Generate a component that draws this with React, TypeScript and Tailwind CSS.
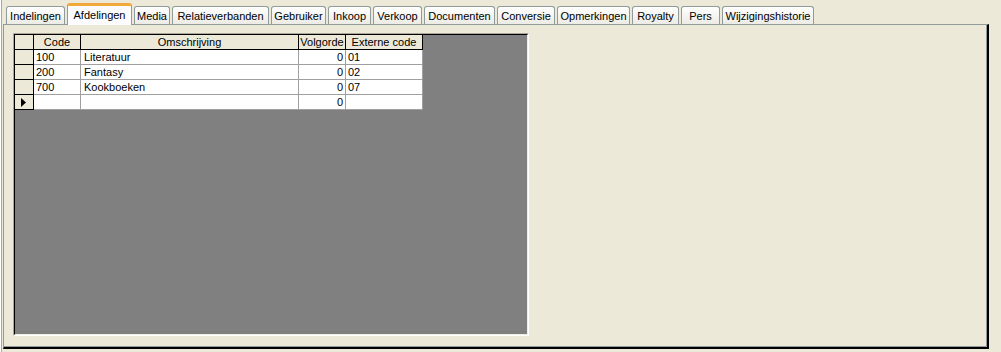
import React from 'react';

const tabs = [
  { name: 'Indelingen', w: 'w-[59px]' },
  { name: 'Afdelingen', w: 'w-[65px]', active: true },
  { name: 'Media', w: 'w-[36px]' },
  { name: 'Relatieverbanden', w: 'w-[97px]' },
  { name: 'Gebruiker', w: 'w-[55px]' },
  { name: 'Inkoop', w: 'w-[43px]' },
  { name: 'Verkoop', w: 'w-[49px]' },
  { name: 'Documenten', w: 'w-[71px]' },
  { name: 'Conversie', w: 'w-[58px]' },
  { name: 'Opmerkingen', w: 'w-[73px]' },
  { name: 'Royalty', w: 'w-[47px]' },
  { name: 'Pers', w: 'w-[39px]' },
  { name: 'Wijzigingshistorie', w: 'w-[92px]' },
];

const rows = [
  { code: '100', desc: 'Literatuur', order: '0', ext: '01' },
  { code: '200', desc: 'Fantasy', order: '0', ext: '02' },
  { code: '700', desc: 'Kookboeken', order: '0', ext: '07' },
  { code: '', desc: '', order: '0', ext: '', current: true },
];

const App: React.FC = () => {
  return (
    <div
      className="w-[1001px] h-[352px] bg-[#ece9d8] border-l border-white text-[11px] text-black overflow-hidden"
      style={{ fontFamily: '"Liberation Sans", Arial, sans-serif' }}
    >
      <div className="h-full border-l border-[#aca899] pl-[1px]">
        {/* Tab strip */}
        <div className="h-[24px] flex items-end gap-[2px] pl-[3px]">
          {tabs.map((t) =>
            t.active ? (
              <div
                key={t.name}
                className={`${t.w} h-[22px] -mb-[1px] relative z-10 bg-[#fcfcfe] border-x border-[#919b9c] border-t-[3px] border-t-[#f2a93b] rounded-t-[3px] flex items-center justify-center leading-none`}
              >
                {t.name}
              </div>
            ) : (
              <div
                key={t.name}
                className={`${t.w} h-[18px] bg-linear-to-b from-white to-[#ecebe5] border border-b-0 border-[#919b9c] rounded-t-[3px] flex items-center justify-center leading-none pt-[1px]`}
              >
                {t.name}
              </div>
            )
          )}
        </div>

        {/* Tab page */}
        <div className="w-[986px] h-[325px] border-t border-l border-[#919b9c] border-r-2 border-b-2 border-r-black border-b-black">
          <div className="h-full border-r border-b border-[#919b9c] pl-[9px] pt-[8px]">
            {/* Grid */}
            <div className="w-[516px] h-[303px] border-t border-l border-[#aca899] border-r border-b border-r-white border-b-white">
              <div className="h-full border-t border-l border-black border-r border-b border-r-[#f1efe2] border-b-[#f1efe2] bg-[#808080]">
                {/* Header */}
                <div className="flex h-[15px]">
                  <div className="w-[19px] bg-[#ece9d8] border-r border-b border-black" />
                  <div className="w-[47px] bg-[#ece9d8] border-r border-b border-black flex items-center justify-center leading-none">Code</div>
                  <div className="w-[218px] bg-[#ece9d8] border-r border-b border-black flex items-center justify-center leading-none">Omschrijving</div>
                  <div className="w-[47px] bg-[#ece9d8] border-r border-b border-black flex items-center justify-center leading-none">Volgorde</div>
                  <div className="w-[77px] bg-[#ece9d8] border-r border-b border-black flex items-center justify-center leading-none">Externe code</div>
                </div>
                {rows.map((r, i) => (
                  <div key={i} className="flex h-[15px]">
                    <div className="w-[19px] bg-[#ece9d8] border-r border-b border-black flex items-center pl-[6px]">
                      {r.current && (
                        <svg width="5" height="9" viewBox="0 0 5 9">
                          <path d="M0 0 L5 4.5 L0 9 Z" fill="black" />
                        </svg>
                      )}
                    </div>
                    <div className="w-[47px] bg-white border-r border-b border-[#a0a0a0] flex items-center pl-[2px] leading-none">{r.code}</div>
                    <div className="w-[218px] bg-white border-r border-b border-[#a0a0a0] flex items-center pl-[3px] leading-none">{r.desc}</div>
                    <div className="w-[47px] bg-white border-r border-b border-[#a0a0a0] flex items-center justify-end pr-[2px] leading-none">{r.order}</div>
                    <div className="w-[77px] bg-white border-r border-b border-[#a0a0a0] flex items-center pl-[2px] leading-none">{r.ext}</div>
                  </div>
                ))}
              </div>
            </div>
          </div>
        </div>
      </div>
    </div>
  );
};

export default App;
